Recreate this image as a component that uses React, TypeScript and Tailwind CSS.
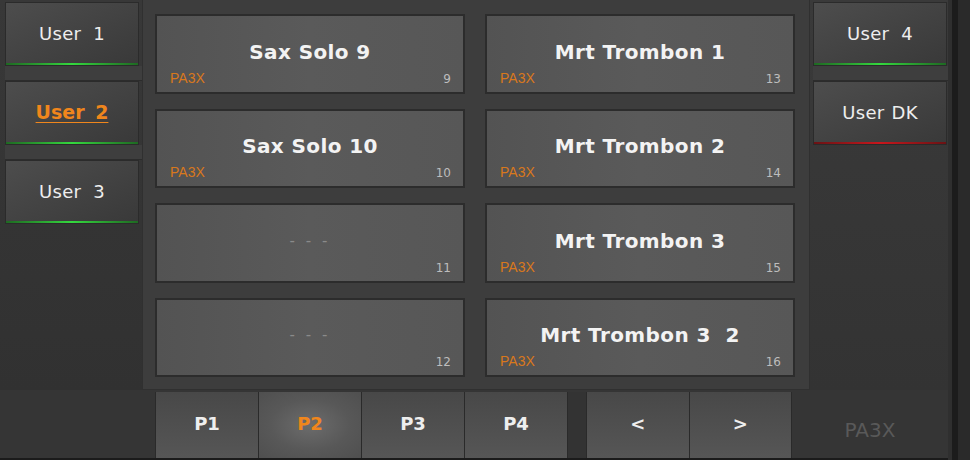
import React from "react";

const CARDS = [
  { name: "Sax Solo 9", num: 9 },
  { name: "Mrt Trombon 1", num: 13 },
  { name: "Sax Solo 10", num: 10 },
  { name: "Mrt Trombon 2", num: 14 },
  { name: "", num: 11 },
  { name: "Mrt Trombon 3", num: 15 },
  { name: "", num: 12 },
  { name: "Mrt Trombon 3  2", num: 16 },
];

const PAGES = [
  { label: "P1" },
  { label: "P2", active: true },
  { label: "P3" },
  { label: "P4" },
];

function UserButton({ label, active, red }: { label: string; active?: boolean; red?: boolean }) {
  return (
    <div className="flex h-[64px] w-[134px] flex-col border border-[#2b2b2b] bg-gradient-to-br from-[#4d4d4d] to-[#393939]">
      <div className="flex flex-1 items-center justify-center pt-[1px]">
        {active ? (
          <span className="text-[19px] font-bold text-[#f0861c] underline underline-offset-[3px] [word-spacing:4px]">
            {label}
          </span>
        ) : (
          <span
            className={
              "text-[18px] tracking-[0.3px] text-[#eeeeee] " + (red ? "[word-spacing:1px]" : "[word-spacing:6px]")
            }
          >
            {label}
          </span>
        )}
      </div>
      <div
        className={
          red
            ? "h-[2px] bg-gradient-to-r from-[#6a1214] via-[#c8161c] to-[#6a1214]"
            : "h-[2px] bg-gradient-to-r from-[#1e6a22] via-[#34d83e] to-[#1e6a22]"
        }
      />
    </div>
  );
}

function Gap() {
  return <div className="h-[15px] w-[138px] border-b border-[#2c2c2c] bg-[#3e3e3e]" />;
}

function Card({ name, num }: { name: string; num: number }) {
  return (
    <div className="relative flex items-center justify-center border-2 border-[#2c2c2c] bg-gradient-to-r from-[#535353] via-[#5a5a5a] to-[#575757]">
      {name ? (
        <span className="-mt-[4px] whitespace-pre text-[20px] font-bold tracking-[0.4px] text-[#f3f3f3]">{name}</span>
      ) : (
        <span className="-mt-[4px] text-[15px] tracking-[3px] text-[#8a8a8a]">- - -</span>
      )}
      {name && (
        <span className="absolute bottom-[7px] left-[13px] font-['Liberation_Sans',sans-serif] text-[14px] leading-none text-[#d9781c]">
          PA3X
        </span>
      )}
      <span className="absolute bottom-[7px] right-[12px] text-[12px] leading-none text-[#bdbdbd]">{num}</span>
    </div>
  );
}

function Tab({ label, active }: { label: string; active?: boolean }) {
  return (
    <div
      className={
        "flex h-full items-center justify-center border-r border-[#2a2a2a] pb-[3px] text-[18px] font-bold " +
        (active
          ? "bg-[radial-gradient(ellipse_at_center,#6c6c6c_0%,#585858_55%,#4f4f4f_100%)] text-[#f0861c]"
          : "bg-gradient-to-b from-[#484848] to-[#565656] text-[#eeeeee]")
      }
    >
      {label}
    </div>
  );
}

export default function App() {
  return (
    <div className="flex h-[460px] w-[970px] overflow-hidden bg-[#353535] font-['DejaVu_Sans',sans-serif]">
      <div className="flex w-[948px] flex-col border-b-2 border-[#1b1b1b]">
        <div className="flex h-[390px]">
          <div className="flex w-[142px] flex-col bg-gradient-to-b from-[#383838] to-[#313131] pl-[5px] pt-[2px]">
            <UserButton label="User 1" />
            <Gap />
            <UserButton label="User 2" active />
            <Gap />
            <UserButton label="User 3" />
          </div>

          <div className="grid w-[668px] grid-cols-2 grid-rows-4 gap-x-[20px] gap-y-[15px] border-x border-b border-[#303030] bg-[#3d3d3d] pb-[12px] pl-[12px] pr-[14px] pt-[14px]">
            {CARDS.map((c) => (
              <Card key={c.num} name={c.name} num={c.num} />
            ))}
          </div>

          <div className="flex w-[138px] flex-col bg-gradient-to-b from-[#3a3a3a] to-[#333333] pl-[3px] pt-[2px]">
            <UserButton label="User 4" />
            <Gap />
            <UserButton label="User DK" red />
          </div>
        </div>

        <div className="flex flex-1 pt-[2px]">
          <div className="w-[156px] border-r border-[#2a2a2a]" />
          <div className="grid w-[412px] grid-cols-4">
            {PAGES.map((p) => (
              <Tab key={p.label} label={p.label} active={p.active} />
            ))}
          </div>
          <div className="w-[19px] border-r border-[#2a2a2a] bg-[#333333]" />
          <div className="grid w-[205px] grid-cols-2">
            <Tab label="<" />
            <Tab label=">" />
          </div>
          <div className="flex flex-1 items-center justify-center pt-[10px] text-[20px] text-[#595959]">PA3X</div>
        </div>
      </div>

      <div className="flex w-[22px]">
        <div className="w-[4px] bg-[#2f2f2f]" />
        <div className="w-[6px] bg-[#1c1c1c]" />
        <div className="flex-1 bg-[#2a2a2a]" />
      </div>
    </div>
  );
}
